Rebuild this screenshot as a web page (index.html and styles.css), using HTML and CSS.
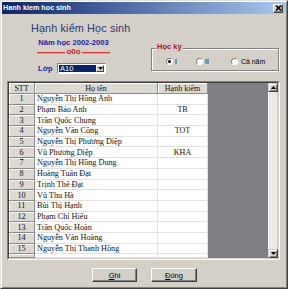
FILE: index.html
```html
<!DOCTYPE html>
<html lang="vi">
<head>
<meta charset="utf-8">
<title>Hạnh kiểm Học sinh</title>
<link rel="stylesheet" href="styles.css">
</head>
<body>
<div class="window">
  <div class="titlebar">
    <span class="title">Hanh kiem hoc sinh</span>
    <span class="close"><svg width="7" height="6" viewBox="0 0 7 6"><path d="M1 0.5L6 5.5M6 0.5L1 5.5" stroke="#000" stroke-width="1.6"/></svg></span>
  </div>
  <div class="top">
    <div class="head">
      <h1 class="heading">Hạnh kiểm Học sinh</h1>
      <div class="year">Năm học 2002-2003</div>
      <div class="sep"><span class="rule"></span><span class="o0o">o0o</span><span class="rule"></span></div>
      <div class="class-row">
        <span class="lbl">Lớp</span>
        <div class="combo">
          <span class="combo-val">A10</span>
          <span class="combo-btn"><svg width="5" height="3" viewBox="0 0 5 3"><path d="M0 0H5L2.5 3Z" fill="#000"/></svg></span>
        </div>
      </div>
    </div>
    <div class="group">
      <span class="legend">Học kỳ</span>
      <div class="opts">
        <label class="opt o1"><span class="radio on"></span>I</label>
        <label class="opt o2"><span class="radio"></span>II</label>
        <label class="opt o3"><span class="radio"></span>Cả năm</label>
      </div>
    </div>
  </div>
  <div class="grid">
    <div class="grid-in">
      <div class="table">
        <div class="hd">STT</div><div class="hd">Họ tên</div><div class="hd">Hạnh kiểm</div>
        <div class="stt">1</div><div class="cell name">Nguyễn Thị Hồng Anh</div><div class="cell hk"></div>
        <div class="stt">2</div><div class="cell name">Phạm Bảo Anh</div><div class="cell hk">TB</div>
        <div class="stt">3</div><div class="cell name">Trần Quốc Chung</div><div class="cell hk"></div>
        <div class="stt">4</div><div class="cell name">Nguyễn Văn Công</div><div class="cell hk">TOT</div>
        <div class="stt">5</div><div class="cell name">Nguyễn Thị Phương Diệp</div><div class="cell hk"></div>
        <div class="stt">6</div><div class="cell name">Vũ Phương Diệp</div><div class="cell hk">KHA</div>
        <div class="stt">7</div><div class="cell name">Nguyễn Thị Hồng Dung</div><div class="cell hk"></div>
        <div class="stt">8</div><div class="cell name">Hoàng Tuấn Đạt</div><div class="cell hk"></div>
        <div class="stt">9</div><div class="cell name">Trịnh Thế Đạt</div><div class="cell hk"></div>
        <div class="stt">10</div><div class="cell name">Vũ Thu Hà</div><div class="cell hk"></div>
        <div class="stt">11</div><div class="cell name">Bùi Thị Hạnh</div><div class="cell hk"></div>
        <div class="stt">12</div><div class="cell name">Phạm Chí Hiếu</div><div class="cell hk"></div>
        <div class="stt">13</div><div class="cell name">Trần Quốc Hoàn</div><div class="cell hk"></div>
        <div class="stt">14</div><div class="cell name">Nguyễn Văn Hoàng</div><div class="cell hk"></div>
        <div class="stt">15</div><div class="cell name">Nguyễn Thị Thanh Hồng</div><div class="cell hk"></div>
        <div class="stt"></div><div class="cell name"></div><div class="cell hk"></div>
      </div>
      <div class="blank"></div>
      <div class="scroll">
        <span class="sb-btn"><svg width="5" height="3" viewBox="0 0 5 3"><path d="M0 3H5L2.5 0Z" fill="#000"/></svg></span>
        <span class="sb-track"></span>
        <span class="sb-btn"><svg width="5" height="3" viewBox="0 0 5 3"><path d="M0 0H5L2.5 3Z" fill="#000"/></svg></span>
      </div>
    </div>
  </div>
  <div class="btns">
    <button class="btn"><u>G</u>hi</button>
    <button class="btn"><u>Đ</u>óng</button>
  </div>
</div>
</body>
</html>
```

FILE: styles.css
```css
* { box-sizing: border-box; margin: 0; padding: 0; }
html, body { width: 288px; height: 289px; overflow: hidden; background: #d4d0c8; }
body { font-family: "Liberation Sans", Arial, sans-serif; color: #000; }

.window {
  width: 288px; height: 289px;
  border: 1px solid; border-color: #e4e2dc #404040 #404040 #e4e2dc;
  box-shadow: inset 1px 1px #fff, inset -1px -1px #808080;
  padding: 1px;
  display: flex; flex-direction: column;
}

.titlebar {
  height: 12px; flex: none;
  background: linear-gradient(to right, #0a246a, #a6caf0);
  display: flex; align-items: center; justify-content: space-between;
  padding: 0 3px 0 1px;
}
.title { color: #fff; font-weight: bold; font-size: 7.2px; line-height: 12px; }
.close {
  width: 10px; height: 9px; background: #d4d0c8;
  border: 1px solid; border-color: #fff #404040 #404040 #fff;
  box-shadow: inset -1px -1px #808080;
  display: flex; align-items: center; justify-content: center;
}

.top { display: flex; height: 67px; flex: none; }
.head { width: 149px; padding-top: 8px; }
.heading {
  margin-left: 29px; font-size: 10.8px; line-height: 12px; font-weight: normal;
  color: #253670; letter-spacing: 0.15px;
}
.year {
  margin: 4px 0 0 35px; width: 73px; text-align: center;
  font-size: 7.6px; line-height: 9px; font-weight: bold; color: #1c1ca0;
}
.sep { margin: 1px 0 0 35px; width: 73px; height: 8px; display: flex; align-items: center; gap: 1px; }
.rule { flex: 1; height: 1px; background: #d03a3a; box-shadow: 0 1px rgba(208, 58, 58, 0.35); }
.o0o { color: #c81e1e; font-weight: bold; font-size: 8px; line-height: 8px; }
.class-row { margin: 7px 0 0 36px; display: flex; align-items: center; height: 11px; }
.lbl { width: 19px; font-size: 7.6px; font-weight: bold; color: #1c1ca0; }
.combo {
  width: 49px; height: 11px; display: flex; background: #fff;
  border: 1px solid; border-color: #808080 #fff #fff #808080;
  padding: 1px;
}
.combo-val {
  flex: 1; background: #0a246a; color: #fff; font-size: 7.5px; line-height: 7px; padding-left: 1px;
}
.combo-btn {
  width: 8px; background: #d4d0c8;
  border: 1px solid; border-color: #fff #404040 #404040 #fff;
  display: flex; align-items: center; justify-content: center;
}

.group {
  position: relative; margin-top: 34px; width: 128px; height: 23px;
  border: 1px solid #808080; box-shadow: inset 1px 1px #fff, 1px 1px #fff;
}
.legend {
  position: absolute; left: 4px; top: -7px; padding: 0 1px;
  background: #d4d0c8; color: #a01414; font-size: 7.5px; line-height: 9px; font-weight: bold;
}
.opts { display: flex; padding: 8px 0 0 14px; height: 100%; }
.opt { display: flex; align-items: center; gap: 2px; height: 8px; font-size: 6.9px; }
.o1 { width: 30px; }
.o2 { width: 35px; }
.o3 { gap: 3px; }
.radio {
  width: 7px; height: 7px; border-radius: 50%; background: #fff;
  border: 1px solid; border-color: #808080 #fff #fff #808080;
  box-shadow: 0 0 0 0.5px #d4d0c8;
  display: flex; align-items: center; justify-content: center;
}
.radio.on::after { content: ""; width: 3px; height: 3px; border-radius: 50%; background: #000; }

.grid {
  margin-left: 5px; width: 273px; height: 179px; flex: none;
  border: 1px solid; border-color: #808080 #fff #fff #808080;
}
.grid-in {
  height: 100%; display: flex;
  border: 1px solid; border-color: #404040 #d4d0c8 #d4d0c8 #404040;
}
.table {
  display: grid; grid-template-columns: 26px 123px 50px;
  grid-template-rows: 11px repeat(15, 10.7px) 1fr;
  font-family: "Liberation Serif", "Times New Roman", serif; font-size: 8px;
  background: #fff; color: #111;
}
.hd, .stt {
  background: #dcd9d2; text-align: center;
  border-right: 1px solid #8a8a8a; border-bottom: 1px solid #8a8a8a;
  box-shadow: inset 1px 1px #fff;
  display: flex; align-items: center; justify-content: center; overflow: hidden;
}
.stt { font-size: 8.2px; }
.cell {
  background: #fff; border-right: 1px solid #e2e2e2; border-bottom: 1px solid #e2e2e2;
  display: flex; align-items: center; overflow: hidden; white-space: nowrap;
}
.name { padding-left: 2px; font-size: 8.2px; }
.hk { justify-content: center; }
.blank { width: 60px; background: #807e82; }
.scroll { width: 10px; display: flex; flex-direction: column; background: #ebe9e4; }
.sb-btn {
  height: 9px; flex: none; background: #d4d0c8;
  border: 1px solid; border-color: #d4d0c8 #404040 #404040 #d4d0c8;
  box-shadow: inset 1px 1px #fff, inset -1px -1px #808080;
  display: flex; align-items: center; justify-content: center;
}
.sb-track { flex: 1; border-left: 1px solid #fff; border-right: 1px solid #d0ccc4; }

.btns { display: flex; gap: 14px; margin: 8px 0 0 90px; }
.btn {
  width: 45px; height: 14px; background: #d4d0c8;
  border: 1px solid; border-color: #fff #404040 #404040 #fff;
  box-shadow: inset -1px -1px #808080;
  font-family: "Liberation Sans", Arial, sans-serif; font-size: 7.5px; color: #000;
}
.btn + .btn { width: 46px; }
```
